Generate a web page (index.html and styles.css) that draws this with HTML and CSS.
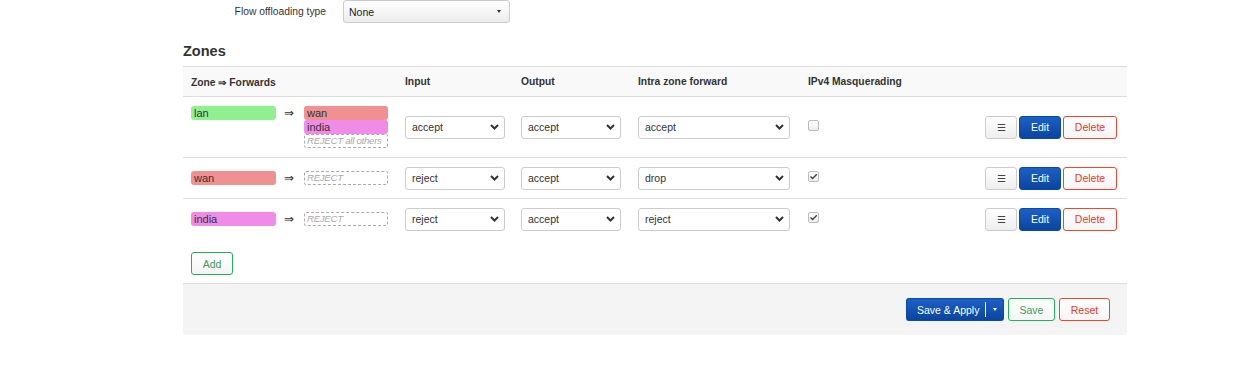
FILE: index.html
```html
<!DOCTYPE html>
<html>
<head>
<meta charset="utf-8">
<link rel="stylesheet" href="styles.css">
</head>
<body>
<div class="page">
  <div class="opt-row">
    <label class="opt-label">Flow offloading type</label>
    <div class="sel-top"><span>None</span><span class="tri"></span></div>
  </div>

  <h3 class="section-title">Zones</h3>

  <div class="table">
    <div class="row head">
      <div class="cell">Zone ⇒ Forwards</div>
      <div class="cell">Input</div>
      <div class="cell">Output</div>
      <div class="cell">Intra zone forward</div>
      <div class="cell">IPv4 Masquerading</div>
      <div class="cell"></div>
    </div>

    <div class="row r1">
      <div class="cell zonecell">
        <span class="badge lan">lan</span>
        <span class="arrow">⇒</span>
        <div class="fwd">
          <span class="badge wan">wan</span>
          <span class="badge india">india</span>
          <span class="reject">REJECT all others</span>
        </div>
      </div>
      <div class="cell"><div class="sel w100"><span>accept</span><svg class="chev" width="9" height="6" viewBox="0 0 9 6"><path d="M1 1 L4.5 4.5 L8 1" fill="none" stroke="#333" stroke-width="2"/></svg></div></div>
      <div class="cell"><div class="sel w100"><span>accept</span><svg class="chev" width="9" height="6" viewBox="0 0 9 6"><path d="M1 1 L4.5 4.5 L8 1" fill="none" stroke="#333" stroke-width="2"/></svg></div></div>
      <div class="cell"><div class="sel w152"><span>accept</span><svg class="chev" width="9" height="6" viewBox="0 0 9 6"><path d="M1 1 L4.5 4.5 L8 1" fill="none" stroke="#333" stroke-width="2"/></svg></div></div>
      <div class="cell"><span class="cb"></span></div>
      <div class="cell actions">
        <button class="btn menu">☰</button>
        <button class="btn edit">Edit</button>
        <button class="btn del">Delete</button>
      </div>
    </div>

    <div class="row r2">
      <div class="cell zonecell">
        <span class="badge wan">wan</span>
        <span class="arrow">⇒</span>
        <div class="fwd">
          <span class="reject">REJECT</span>
        </div>
      </div>
      <div class="cell"><div class="sel w100"><span>reject</span><svg class="chev" width="9" height="6" viewBox="0 0 9 6"><path d="M1 1 L4.5 4.5 L8 1" fill="none" stroke="#333" stroke-width="2"/></svg></div></div>
      <div class="cell"><div class="sel w100"><span>accept</span><svg class="chev" width="9" height="6" viewBox="0 0 9 6"><path d="M1 1 L4.5 4.5 L8 1" fill="none" stroke="#333" stroke-width="2"/></svg></div></div>
      <div class="cell"><div class="sel w152"><span>drop</span><svg class="chev" width="9" height="6" viewBox="0 0 9 6"><path d="M1 1 L4.5 4.5 L8 1" fill="none" stroke="#333" stroke-width="2"/></svg></div></div>
      <div class="cell"><span class="cb"><svg width="9" height="9" viewBox="0 0 9 9"><path d="M1.5 4.5 L3.6 6.6 L7.8 2.2" fill="none" stroke="#444" stroke-width="1.4"/></svg></span></div>
      <div class="cell actions">
        <button class="btn menu">☰</button>
        <button class="btn edit">Edit</button>
        <button class="btn del">Delete</button>
      </div>
    </div>

    <div class="row r3">
      <div class="cell zonecell">
        <span class="badge india">india</span>
        <span class="arrow">⇒</span>
        <div class="fwd">
          <span class="reject">REJECT</span>
        </div>
      </div>
      <div class="cell"><div class="sel w100"><span>reject</span><svg class="chev" width="9" height="6" viewBox="0 0 9 6"><path d="M1 1 L4.5 4.5 L8 1" fill="none" stroke="#333" stroke-width="2"/></svg></div></div>
      <div class="cell"><div class="sel w100"><span>accept</span><svg class="chev" width="9" height="6" viewBox="0 0 9 6"><path d="M1 1 L4.5 4.5 L8 1" fill="none" stroke="#333" stroke-width="2"/></svg></div></div>
      <div class="cell"><div class="sel w152"><span>reject</span><svg class="chev" width="9" height="6" viewBox="0 0 9 6"><path d="M1 1 L4.5 4.5 L8 1" fill="none" stroke="#333" stroke-width="2"/></svg></div></div>
      <div class="cell"><span class="cb"><svg width="9" height="9" viewBox="0 0 9 9"><path d="M1.5 4.5 L3.6 6.6 L7.8 2.2" fill="none" stroke="#444" stroke-width="1.4"/></svg></span></div>
      <div class="cell actions">
        <button class="btn menu">☰</button>
        <button class="btn edit">Edit</button>
        <button class="btn del">Delete</button>
      </div>
    </div>
  </div>

  <div class="add-row">
    <button class="btn add">Add</button>
  </div>

  <div class="footer">
    <div class="split">
      <button class="btn apply">Save &amp; Apply</button><button class="btn apply-drop"><span class="sep"></span><span class="tri white"></span></button>
    </div>
    <button class="btn save">Save</button>
    <button class="btn reset">Reset</button>
  </div>
</div>
</body>
</html>
```

FILE: styles.css
```css
* { box-sizing: border-box; }
html, body { margin: 0; padding: 0; background: #fff; }
body {
  font-family: "Liberation Sans", Arial, sans-serif;
  font-size: 10.5px;
  color: #333;
}
.page {
  margin-left: 183px;
  width: 944px;
}
.opt-row {
  display: flex;
  align-items: center;
  height: 23px;
}
.opt-label {
  width: 143px;
  text-align: right;
  font-size: 10.3px;
  color: #333;
  margin-right: 17px;
}
.sel-top {
  width: 167px;
  height: 23px;
  border: 1px solid #ccc;
  border-radius: 3px;
  background: linear-gradient(#fff, #ececec);
  display: flex;
  align-items: center;
  justify-content: space-between;
  padding: 0 8px 0 5px;
  color: #222;
}
.tri {
  width: 0; height: 0;
  border-left: 2px solid transparent;
  border-right: 2px solid transparent;
  border-top: 3px solid #333;
}
.tri.white { border-top-color: #fff; margin-left: 7px; }

.section-title {
  margin: 20px 0 7px 0;
  font-size: 14.5px;
  line-height: 16px;
  font-weight: bold;
  color: #333;
}

.table { width: 944px; }
.row {
  display: grid;
  grid-template-columns: 214px 116px 117px 170px 177px 150px;
  align-items: center;
  border-bottom: 1px solid #ddd;
}
.row.head {
  border-top: 1px solid #ddd;
  height: 31px;
  background: #f9f9f9;
  font-weight: bold;
  font-size: 10.3px;
  color: #333;
}
.row.r1 { height: 61px; }
.row.r2 { height: 41px; }
.row.r3 { height: 40px; border-bottom: none; }
.cell { padding: 0 8px; display: flex; align-items: center; }

.zonecell { align-items: flex-start; }
.badge {
  display: block;
  height: 14px;
  line-height: 14px;
  border-radius: 3px;
  padding-left: 3px;
  font-size: 11px;
  color: #333;
}
.zonecell > .badge { width: 85px; }
.fwd { display: flex; flex-direction: column; width: 84px; }
.fwd .badge { width: 84px; }
.lan { background: #90f090; }
.wan { background: #f09090; }
.india { background: #f08ce8; }
.arrow {
  width: 28px;
  text-align: center;
  height: 14px;
  line-height: 14px;
  font-size: 12px;
  color: #333;
  padding-right: 3px;
}
.reject {
  display: block;
  height: 14px;
  line-height: 12px;
  border: 1px dashed #aaa;
  border-radius: 2px;
  padding-left: 2px;
  font-style: italic;
  font-size: 9.6px;
  letter-spacing: -0.25px;
  color: #aaa;
  white-space: nowrap;
  overflow: hidden;
}

.sel {
  height: 23px;
  border: 1px solid #ccc;
  border-radius: 3px;
  background: #fff;
  display: flex;
  align-items: center;
  justify-content: space-between;
  padding: 0 5px 0 6px;
  color: #333;
}
.w100 { width: 100px; }
.w152 { width: 152px; }
.chev { display: block; }

.cb {
  width: 11px;
  height: 11px;
  margin-bottom: 3px;
  border: 1px solid #bbb;
  border-radius: 2px;
  background: linear-gradient(#fff, #ededed);
  display: flex;
  align-items: center;
  justify-content: center;
}
.cb svg { display: block; }

.actions { justify-content: flex-end; padding-right: 10px; gap: 2px; }
.btn {
  height: 23px;
  border-radius: 3px;
  font-family: "Liberation Sans", Arial, sans-serif;
  font-size: 10.5px;
  padding: 0;
  margin: 0;
  cursor: pointer;
  display: inline-flex;
  align-items: center;
  justify-content: center;
}
.menu {
  width: 32px;
  border: 1px solid #ccc;
  background: linear-gradient(#fff, #eee);
  color: #444;
  font-size: 10px;
}
.edit, .apply, .apply-drop {
  border: 1px solid #0b4aa6;
  background: linear-gradient(#1c60c6, #0a45a0);
  color: #fff;
}
.edit { width: 42px; }
.del, .reset {
  border: 1px solid #f0452f;
  background: linear-gradient(#fff, #f5f5f5);
  color: #e8392a;
}
.del { width: 54px; }

.add-row {
  padding: 13px 8px 8px 8px;
  border-bottom: 1px solid #ddd;
}
.add, .save {
  border: 1px solid #1db35b;
  background: linear-gradient(#fff, #f4f4f4);
  color: #3a9a5e;
}
.add { width: 42px; height: 23px; }

.footer {
  background: #f4f4f4;
  border-radius: 0 0 3px 3px;
  padding: 14px 17px 14px 0;
  display: flex;
  justify-content: flex-end;
  gap: 4px;
}
.split { display: flex; }
.apply {
  width: 79px;
  border-radius: 3px 0 0 3px;
  border-right: none;
  justify-content: flex-start;
  padding-left: 10px;
}
.apply-drop {
  width: 19px;
  border-radius: 0 3px 3px 0;
  border-left: none;
  justify-content: flex-start;
}
.sep {
  width: 1px;
  height: 15px;
  background: #fff;
}
.save { width: 47px; }
.reset { width: 51px; }
```
